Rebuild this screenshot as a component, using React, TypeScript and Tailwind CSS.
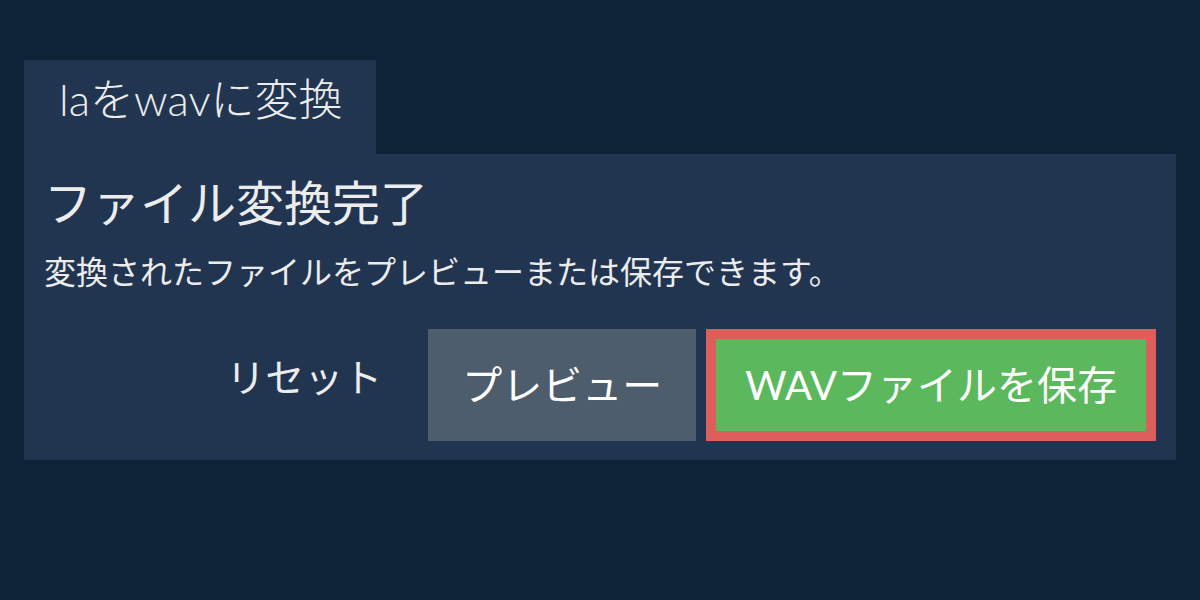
import React from "react";

export default function App() {
  const font = { fontFamily: 'Lato, "Noto Sans CJK JP", sans-serif' };
  return (
    <div
      className="w-[1200px] h-[600px] bg-[#0f2338] pt-[60px] px-[24px] text-[#ececec]"
      style={font}
    >
      <div className="flex">
        <div className="bg-[#213550] h-[94px] pl-[35px] pr-[34px] pt-[13px] text-[44px] leading-[1.2] font-light">
          laをwavに変換
        </div>
      </div>
      <div className="bg-[#213550] p-[20px] pb-[19px]">
        <div className="text-[48px] leading-[1.2] mb-[16px]">ファイル変換完了</div>
        <div className="text-[32px] leading-[1.5]">
          変換されたファイルをプレビューまたは保存できます。
        </div>
        <div className="flex justify-end gap-[10px] mt-[33px]">
          <button className="pl-[30px] pr-[36px] pt-[19px] pb-[33px] text-[39px] leading-[1.5] text-[#ececec]">
            リセット
          </button>
          <button className="bg-[#4e5d6c] px-[34px] py-[26px] text-[40px] leading-[1.5] text-white">
            プレビュー
          </button>
          <button className="bg-[#5cb85c] border-[10px] border-[#dc5f5b] px-[29px] py-[16px] text-[40px] leading-[1.5] text-white">
            WAVファイルを保存
          </button>
        </div>
      </div>
    </div>
  );
}
